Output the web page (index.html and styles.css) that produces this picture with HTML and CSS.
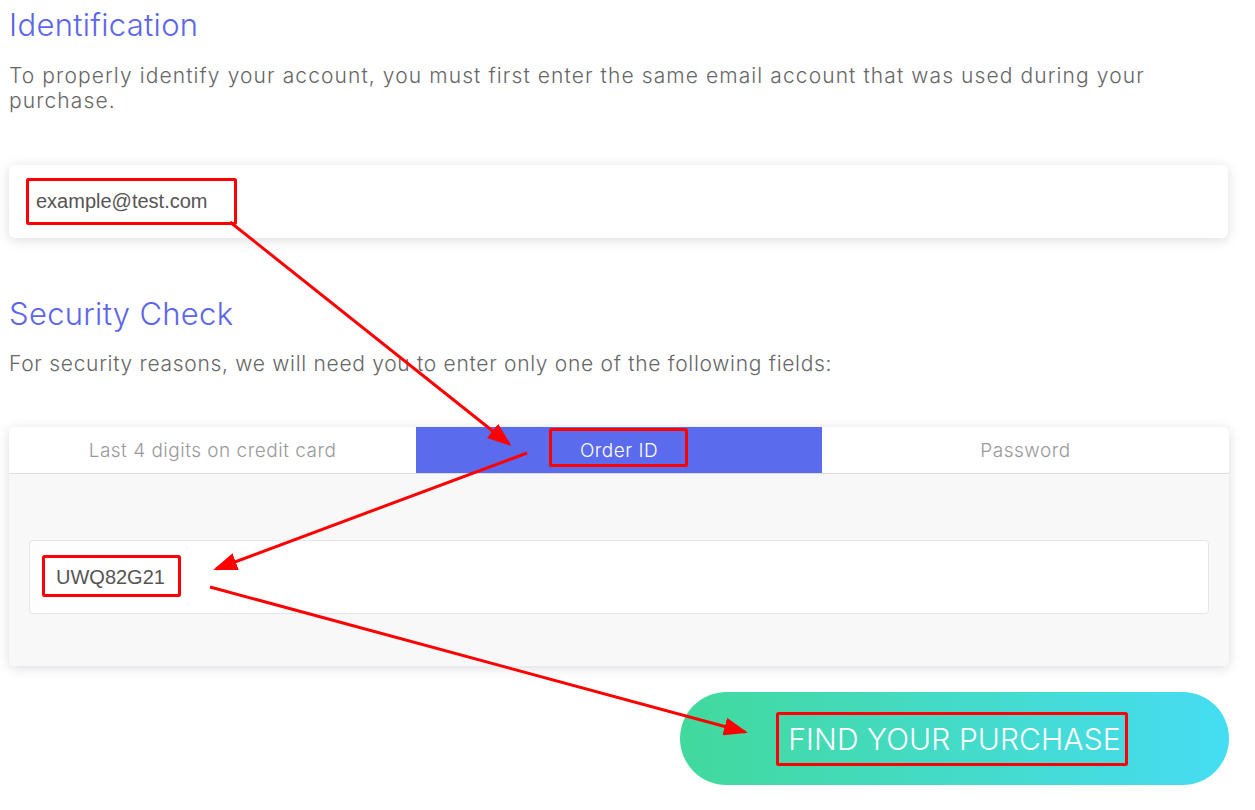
FILE: index.html
```html
<!DOCTYPE html>
<html>
<head>
<meta charset="utf-8">
<link rel="stylesheet" href="styles.css">
</head>
<body>
<div class="page">
  <section class="block">
    <h1 class="title">Identification</h1>
    <p class="lead wrap">To properly identify your account, you must first enter the same email account that was used during your purchase.</p>
    <div class="card email-card">
      <span class="field-text">example@test.com</span>
    </div>
  </section>

  <section class="block security">
    <h1 class="title">Security Check</h1>
    <p class="lead">For security reasons, we will need you to enter only one of the following fields:</p>
    <div class="card tabs-card">
      <div class="tabs">
        <div class="tab">Last 4 digits on credit card</div>
        <div class="tab active">Order ID</div>
        <div class="tab">Password</div>
      </div>
      <div class="tab-body">
        <div class="inner-field"><span class="field-text">UWQ82G21</span></div>
      </div>
    </div>
  </section>

  <div class="actions">
    <button class="find-btn">FIND YOUR PURCHASE</button>
  </div>

  <svg class="annot" width="1255" height="810" viewBox="0 0 1255 810">
    <defs>
      <marker id="ah" markerWidth="8" markerHeight="6" refX="7" refY="3" orient="auto" markerUnits="strokeWidth">
        <path d="M0,0 L8,3 L0,6 Z" fill="#f00"/>
      </marker>
    </defs>
    <g fill="none" stroke="#f00" stroke-width="3">
      <rect x="27.5" y="179.5" width="208" height="44" rx="1"/>
      <rect x="550.5" y="429.5" width="136" height="36" rx="1"/>
      <rect x="43.5" y="556.5" width="136" height="39" rx="1"/>
      <rect x="777.5" y="713.5" width="349" height="51" rx="1"/>
    </g>
    <g stroke="#f00" stroke-width="3" fill="none">
      <line x1="230" y1="222" x2="509" y2="444" marker-end="url(#ah)"/>
      <line x1="527" y1="453" x2="216" y2="569" marker-end="url(#ah)"/>
      <line x1="210" y1="587" x2="745" y2="732" marker-end="url(#ah)"/>
    </g>
  </svg>
</div>
</body>
</html>
```

FILE: styles.css
```css
* { box-sizing: border-box; }
html, body { margin: 0; padding: 0; background: #fff; }
body { font-family: Inter, "Open Sans", sans-serif; }
.page {
  position: relative;
  width: 1255px;
  height: 810px;
  padding: 0 27px 0 9px;
  overflow: hidden;
}
.block { display: flex; flex-direction: column; }
.title {
  margin: 5px 0 0;
  font-size: 31px;
  font-weight: 300;
  color: #5c66ea;
  line-height: 40px;
  letter-spacing: 0.3px;
}
.lead {
  margin: 18px 0 0;
  font-size: 21px;
  font-weight: 300;
  color: #666;
  line-height: 25px;
  letter-spacing: 0.7px;
}
.lead.wrap { max-width: 1170px; letter-spacing: 1.1px; }
.card {
  background: #fff;
  border-radius: 6px;
  box-shadow: 0 2px 12px rgba(40, 50, 80, 0.17);
}
.email-card {
  margin-top: 52px;
  height: 73px;
  display: flex;
  align-items: center;
  padding-left: 27px;
}
.field-text {
  font-family: "Liberation Sans", Arial, sans-serif;
  font-size: 20px;
  color: #555;
}
.security .title { margin-top: 56px; }
.security .lead { margin-top: 17px; }
.tabs-card {
  margin-top: 51px;
  overflow: hidden;
  width: 1220px;
}
.tabs {
  display: grid;
  grid-template-columns: 407px 406px 407px;
  height: 47px;
  border-bottom: 1px solid #dcdcdc;
}
.tab {
  display: flex;
  align-items: center;
  justify-content: center;
  font-size: 19px;
  font-weight: 300;
  color: #999;
  background: #fff;
  letter-spacing: 0.5px;
}
.tab.active { background: #5b6bee; color: #fff; }
.tab-body {
  background: #f8f8f8;
  padding: 66px 20px 52px;
}
.inner-field {
  background: #fff;
  border: 1px solid #e6e6e6;
  border-radius: 4px;
  height: 74px;
  display: flex;
  align-items: center;
  padding-left: 26px;
}
.actions {
  display: flex;
  justify-content: flex-end;
  margin-top: 26px;
  width: 1220px;
}
.find-btn {
  width: 549px;
  height: 93px;
  border: none;
  border-radius: 47px;
  background: linear-gradient(90deg, #42d99d 0%, #45ddf3 100%);
  color: #fff;
  font-family: Inter, "Open Sans", sans-serif;
  font-size: 30px;
  font-weight: 300;
  letter-spacing: 0.1px;
  padding: 0 0 0 0;
}
.annot {
  position: absolute;
  left: 0;
  top: 0;
  pointer-events: none;
}
```
